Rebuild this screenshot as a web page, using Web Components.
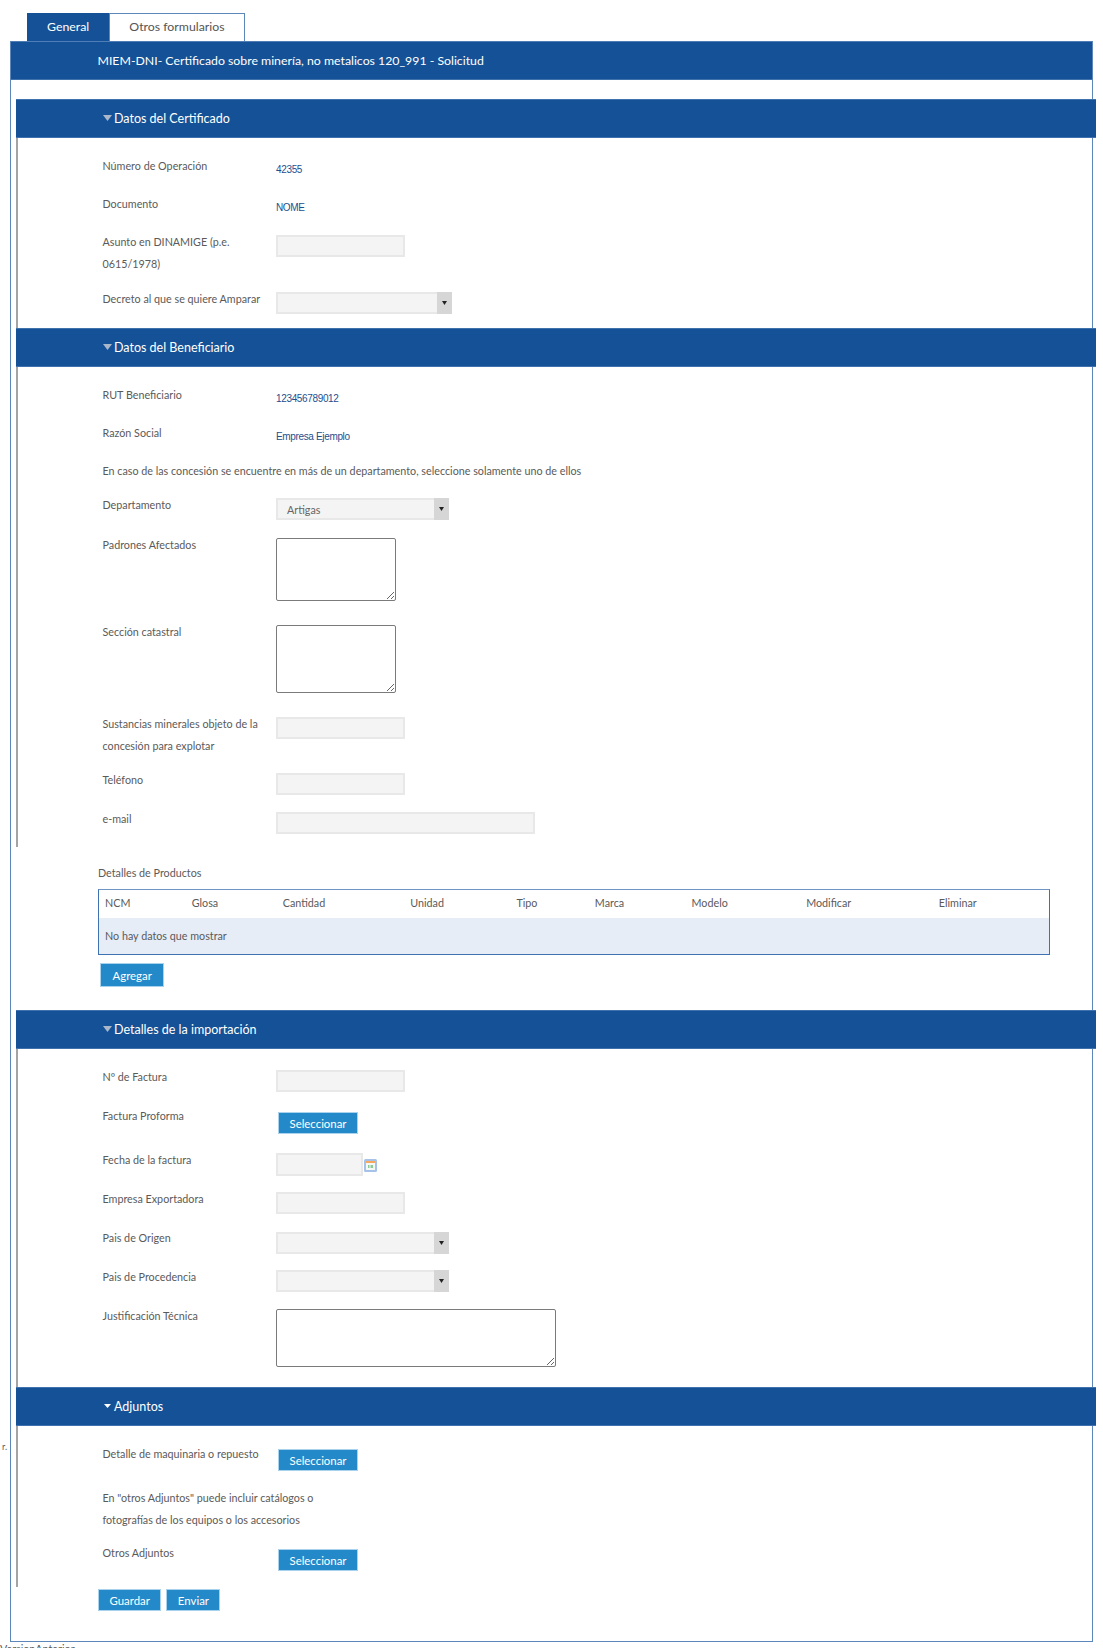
<!DOCTYPE html>
<html lang="es">
<head>
<meta charset="utf-8">
<title>MIEM-DNI</title>
<style>
  html, body { margin: 0; height: 1648px; overflow: hidden; background: #fff; }
  body { position: relative; font: 10.75px Lato, "Open Sans", sans-serif; color: #5a5a5a; }
  .stray { position: absolute; left: 2px; top: 1441px; line-height: 12px; font-size: 9px; }
</style>
</head>
<body>
<span class="stray">r.</span>
<tab-bar>
  <tab-item active>General</tab-item>
  <tab-item>Otros formularios</tab-item>
</tab-bar>
<form-panel heading="MIEM-DNI- Certificado sobre minería, no metalicos 120_991 - Solicitud">
  <form-section heading="Datos del Certificado" style="--bottom:2px">
    <form-row label="Número de Operación"><read-value>42355</read-value></form-row>
    <form-row label="Documento"><read-value>NOME</read-value></form-row>
    <form-row label="Asunto en DINAMIGE (p.e. 0615/1978)" style="--gap:13px"><text-field width="129"></text-field></form-row>
    <form-row label="Decreto al que se quiere Amparar"><select-field width="176"></select-field></form-row>
  </form-section>

  <form-section heading="Datos del Beneficiario" style="--bottom:1px">
    <form-row label="RUT Beneficiario"><read-value>123456789012</read-value></form-row>
    <form-row label="Razón Social"><read-value>Empresa Ejemplo</read-value></form-row>
    <form-note>En caso de las concesión se encuentre en más de un departamento, seleccione solamente uno de ellos</form-note>
    <form-row label="Departamento" style="--gap:14px"><select-field width="173" value="Artigas"></select-field></form-row>
    <form-row label="Padrones Afectados" style="--gap:20px"><area-field width="120" height="63"></area-field></form-row>
    <form-row label="Sección catastral" style="--gap:20px"><area-field width="120" height="68"></area-field></form-row>
    <form-row label="Sustancias minerales objeto de la concesión para explotar"><text-field width="129"></text-field></form-row>
    <form-row label="Teléfono" style="--gap:13px"><text-field width="129"></text-field></form-row>
    <form-row label="e-mail"><text-field width="259"></text-field></form-row>
  </form-section>

  <product-grid heading="Detalles de Productos" empty="No hay datos que mostrar"
    columns="NCM,Glosa,Cantidad,Unidad,Tipo,Marca,Modelo,Modificar,Eliminar"></product-grid>

  <form-section heading="Detalles de la importación" style="--bottom:8px">
    <form-row label="Nº de Factura" style="--gap:13px"><text-field width="129"></text-field></form-row>
    <form-row label="Factura Proforma" style="--top:7px;--gap:15px"><action-button inset>Seleccionar</action-button></form-row>
    <form-row label="Fecha de la factura"><date-field></date-field></form-row>
    <form-row label="Empresa Exportadora" style="--gap:13px"><text-field width="129"></text-field></form-row>
    <form-row label="Pais de Origen" style="--top:5px;--gap:12px"><select-field width="173"></select-field></form-row>
    <form-row label="Pais de Procedencia" style="--gap:13px"><select-field width="173"></select-field></form-row>
    <form-row label="Justificación Técnica"><area-field width="280" height="58"></area-field></form-row>
  </form-section>

  <form-section heading="Adjuntos" open-arrow style="--bottom:4px">
    <form-row label="Detalle de maquinaria o repuesto" style="--top:6px;--gap:16px"><action-button inset>Seleccionar</action-button></form-row>
    <form-note style="width:225px;--gap:11px">En "otros Adjuntos" puede incluir catálogos o fotografías de los equipos o los accesorios</form-note>
    <form-row label="Otros Adjuntos" style="--top:7px"><action-button inset>Seleccionar</action-button></form-row>
  </form-section>

  <form-actions>
    <action-button>Guardar</action-button>
    <action-button>Enviar</action-button>
  </form-actions>
</form-panel>
<version-link>VersionAnterior</version-link>

<script>
class TabBar extends HTMLElement {
  connectedCallback() {
    this.attachShadow({ mode: "open" });
    this.shadowRoot.innerHTML = `
      <style>
        :host { display: flex; padding: 13px 0 0 27px; height: 28px; }
      </style>
      <slot></slot>`;
  }
}

class TabItem extends HTMLElement {
  connectedCallback() {
    this.attachShadow({ mode: "open" });
    this.shadowRoot.innerHTML = `
      <style>
        :host {
          display: flex; align-items: center; box-sizing: border-box; height: 28px;
          padding: 0 19.2px 2px; font-size: 12.3px; color: #555;
          border: 1px solid #5d87ba; border-bottom: 0; background: #fff;
        }
        :host([active]) { padding: 0 19px 2px; background: #155196; border-color: #155196; color: #fff; }
      </style>
      <slot></slot>`;
  }
}

class FormPanel extends HTMLElement {
  connectedCallback() {
    this.attachShadow({ mode: "open" });
    this.shadowRoot.innerHTML = `
      <style>
        :host {
          display: block; box-sizing: border-box; width: 1083px; margin-left: 10px;
          border: 1px solid #5d87ba; border-top: 0; padding-bottom: 30px;
        }
        .title {
          display: flex; align-items: center; box-sizing: border-box; height: 39px; padding-left: 86.5px;
          background: #155196; color: #fff; font-size: 12.3px;
          border-top: 1px solid #4f7db5; border-bottom: 1px solid #3f72ad;
        }
        .body { padding: 19px 0 0 5px; margin-right: -4px; }
      </style>
      <div class="title"></div>
      <div class="body"><slot></slot></div>`;
    this.shadowRoot.querySelector(".title").textContent = this.getAttribute("heading");
  }
}

class FormSection extends HTMLElement {
  connectedCallback() {
    this.attachShadow({ mode: "open" });
    this.shadowRoot.innerHTML = `
      <style>
        :host { display: block; }
        header {
          display: flex; align-items: center; box-sizing: border-box; height: 39px; padding: 0 0 1px 87px;
          background: #155196; color: #fff; font-size: 12.5px;
          border-top: 1px solid #3f72ad; border-bottom: 1px solid #3f72ad;
        }
        svg { margin-right: 2px; }
        .content { padding: 17px 0 var(--bottom, 0) 84.5px; border-left: 2px solid #a4a4a4; }
      </style>
      <header>
        <svg width="9" height="6" viewBox="0 0 9 6"><path d="M0 0h9L4.5 6z" fill="#a9b7c9"/></svg>
        <span></span>
      </header>
      <div class="content"><slot></slot></div>`;
    this.shadowRoot.querySelector("span").textContent = this.getAttribute("heading");
    if (this.hasAttribute("open-arrow")) {
      const arrow = this.shadowRoot.querySelector("path");
      arrow.setAttribute("d", "M1 1h7L4.5 5z");
      arrow.setAttribute("fill", "#fff");
    }
  }
}

class FormRow extends HTMLElement {
  connectedCallback() {
    this.attachShadow({ mode: "open" });
    this.shadowRoot.innerHTML = `
      <style>
        :host {
          display: grid; grid-template-columns: 165px 1fr; column-gap: 8.5px;
          margin-bottom: var(--gap, 12px);
        }
        .label { line-height: 22px; }
        .control { padding-top: var(--top, 4px); }
      </style>
      <div class="label"></div>
      <div class="control"><slot></slot></div>`;
    this.shadowRoot.querySelector(".label").textContent = this.getAttribute("label");
  }
}

class FormNote extends HTMLElement {
  connectedCallback() {
    this.attachShadow({ mode: "open" });
    this.shadowRoot.innerHTML = `
      <style>
        :host { display: block; line-height: 22px; margin-bottom: var(--gap, 12px); }
      </style>
      <slot></slot>`;
  }
}

class ReadValue extends HTMLElement {
  connectedCallback() {
    this.attachShadow({ mode: "open" });
    this.shadowRoot.innerHTML = `
      <style>
        :host { display: block; font: 10px/22px "Liberation Sans", sans-serif; letter-spacing: -.35px; color: #1c4f8f; }
      </style>
      <slot></slot>`;
  }
}

class TextField extends HTMLElement {
  connectedCallback() {
    this.attachShadow({ mode: "open" });
    this.shadowRoot.innerHTML = `
      <style>
        :host { display: block; }
        input {
          display: block; box-sizing: border-box; width: ${this.getAttribute("width")}px; height: 22px;
          margin: 0; padding: 0 8px; background: #f4f4f4; border: 2px solid #e8e8e8; outline: 0;
        }
      </style>
      <input type="text">`;
  }
}

class SelectField extends HTMLElement {
  connectedCallback() {
    this.attachShadow({ mode: "open" });
    this.shadowRoot.innerHTML = `
      <style>
        :host { display: block; }
        .box {
          display: flex; align-items: center; box-sizing: border-box; width: ${this.getAttribute("width")}px; height: 22px;
          background: #f4f4f4; border: 2px solid #e8e8e8; border-right: 0; color: #666; padding-left: 9px;
        }
        .value { flex: 1; }
        .arrow {
          display: flex; align-items: center; justify-content: center;
          width: 15px; height: 22px; margin: -2px 0; background: #d6d6d6;
        }
      </style>
      <div class="box">
        <span class="value"></span>
        <span class="arrow"><svg width="5" height="4" viewBox="0 0 5 4"><path d="M0 0h5L2.5 4z" fill="#222"/></svg></span>
      </div>`;
    this.shadowRoot.querySelector(".value").textContent = this.getAttribute("value") || "";
  }
}

class AreaField extends HTMLElement {
  connectedCallback() {
    this.attachShadow({ mode: "open" });
    this.shadowRoot.innerHTML = `
      <style>
        :host { display: block; }
        textarea {
          display: block; box-sizing: border-box; margin: 0; padding: 2px;
          width: ${this.getAttribute("width")}px; height: ${this.getAttribute("height")}px;
          background: #fff; border: 1px solid #7b7b7b; border-radius: 2px; outline: 0;
        }
      </style>
      <textarea></textarea>`;
  }
}

class DateField extends HTMLElement {
  connectedCallback() {
    this.attachShadow({ mode: "open" });
    this.shadowRoot.innerHTML = `
      <style>
        :host { display: flex; align-items: flex-start; gap: 1px; }
        input {
          display: block; box-sizing: border-box; width: 87px; height: 23px; margin: 0;
          background: #f4f4f4; border: 2px solid #e8e8e8; outline: 0;
        }
        svg { margin-top: 6px; }
      </style>
      <input type="text">
      <svg width="13" height="13" viewBox="0 0 13 13">
        <rect width="13" height="13" rx="1.5" fill="#a6c2e8"/>
        <rect x="2" y="2" width="9" height="9" fill="#f6f8f6"/>
        <rect x="2" y="2" width="9" height="2" fill="#f7a85e"/>
        <rect x="4" y="6" width="1.5" height="3" fill="#8ccb98"/>
        <rect x="6.5" y="6" width="2.5" height="3" fill="#8ccb98"/>
      </svg>`;
  }
}

class ActionButton extends HTMLElement {
  connectedCallback() {
    this.attachShadow({ mode: "open" });
    this.shadowRoot.innerHTML = `
      <style>
        :host {
          display: inline-flex; align-items: center; box-sizing: border-box;
          height: var(--height, 22px); padding: 0 var(--pad, 10.5px); font-size: 11.4px; color: #fff;
          background: #2489c9; border: 1px solid #a9d2ec;
        }
        :host([inset]) { margin-left: 2px; }
      </style>
      <slot></slot>`;
  }
}

class FormActions extends HTMLElement {
  connectedCallback() {
    this.attachShadow({ mode: "open" });
    this.shadowRoot.innerHTML = `
      <style>
        :host { display: flex; gap: 5px; padding: 2px 0 0 82px; }
      </style>
      <slot></slot>`;
  }
}

class ProductGrid extends HTMLElement {
  connectedCallback() {
    const widths = [86.7, 90.9, 127.4, 106, 78.4, 96.6, 114.5, 132.5, 116];
    const columns = this.getAttribute("columns").split(",");
    this.attachShadow({ mode: "open" });
    this.shadowRoot.innerHTML = `
      <style>
        :host { display: block; padding: 15px 0 23px 82px; }
        .heading { line-height: 22px; margin-bottom: 5px; }
        table {
          box-sizing: border-box; width: 952px; height: 66px; table-layout: fixed;
          border-collapse: separate; border-spacing: 0; border: 1px solid #3f72b0;
          border-top-color: #6e95c4;
        }
        th, td { padding: 0 0 0 6px; text-align: left; font-weight: 400; }
        th { height: 25px; padding-bottom: 3px; }
        td { height: 35px; padding-bottom: 1px; background: #e6edf7; }
        action-button { --height: 24px; --pad: 11.5px; margin: 8px 0 0 2px; }
      </style>
      <div class="heading"></div>
      <table>
        <colgroup>${widths.map(w => `<col style="width:${w}px">`).join("")}</colgroup>
        <tr>${columns.map(c => `<th>${c}</th>`).join("")}</tr>
        <tr><td colspan="${columns.length}"></td></tr>
      </table>
      <action-button>Agregar</action-button>`;
    this.shadowRoot.querySelector(".heading").textContent = this.getAttribute("heading");
    this.shadowRoot.querySelector("td").textContent = this.getAttribute("empty");
  }
}

class VersionLink extends HTMLElement {
  connectedCallback() {
    this.attachShadow({ mode: "open" });
    this.shadowRoot.innerHTML = `
      <style>
        :host { display: block; line-height: 14px; }
      </style>
      <slot></slot>`;
  }
}

customElements.define("tab-bar", TabBar);
customElements.define("tab-item", TabItem);
customElements.define("form-panel", FormPanel);
customElements.define("form-section", FormSection);
customElements.define("form-row", FormRow);
customElements.define("form-note", FormNote);
customElements.define("read-value", ReadValue);
customElements.define("text-field", TextField);
customElements.define("select-field", SelectField);
customElements.define("area-field", AreaField);
customElements.define("date-field", DateField);
customElements.define("action-button", ActionButton);
customElements.define("form-actions", FormActions);
customElements.define("product-grid", ProductGrid);
customElements.define("version-link", VersionLink);
</script>
</body>
</html>
